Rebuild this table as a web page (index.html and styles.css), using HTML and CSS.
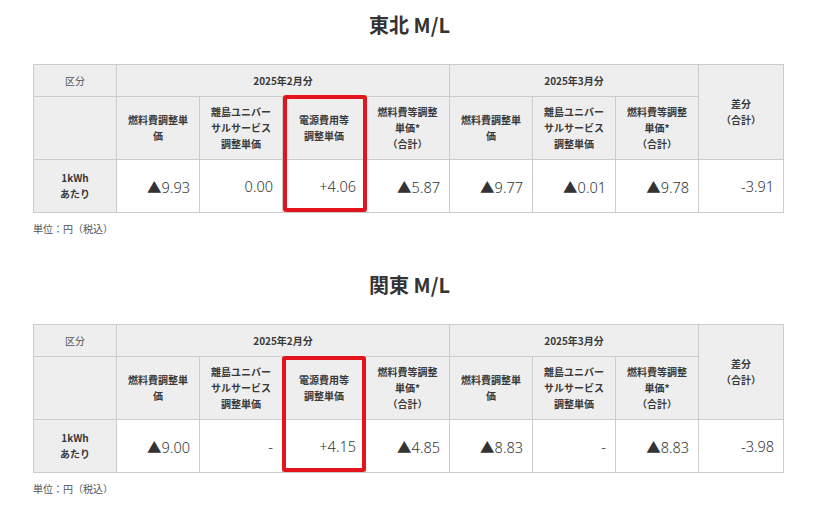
FILE: index.html
```html
<!DOCTYPE html>
<html lang="ja">
<head>
<meta charset="utf-8">
<title>燃料費調整単価</title>
<link rel="stylesheet" href="styles.css">
</head>
<body>
<main class="page">
  <section class="block">
    <h2 class="title">東北 M/L</h2>
    <div class="table-wrap">
      <table class="rate">
        <colgroup>
          <col class="c83"><col class="c83"><col class="c83"><col class="c83"><col class="c84"><col class="c83"><col class="c83"><col class="c83"><col class="c85">
        </colgroup>
        <tr class="r1">
          <th class="label">区分</th>
          <th colspan="4">2025年2月分</th>
          <th colspan="3">2025年3月分</th>
          <th rowspan="2">差分<br>（合計）</th>
        </tr>
        <tr class="r2">
          <th></th>
          <th>燃料費調整単<br>価</th>
          <th>離島ユニバー<br>サルサービス<br>調整単価</th>
          <th>電源費用等<br>調整単価</th>
          <th>燃料費等調整<br>単価*<br>（合計）</th>
          <th>燃料費調整単<br>価</th>
          <th>離島ユニバー<br>サルサービス<br>調整単価</th>
          <th>燃料費等調整<br>単価*<br>（合計）</th>
        </tr>
        <tr class="r3">
          <th>1kWh<br>あたり</th>
          <td>▲9.93</td>
          <td>0.00</td>
          <td>+4.06</td>
          <td>▲5.87</td>
          <td>▲9.77</td>
          <td>▲0.01</td>
          <td>▲9.78</td>
          <td>-3.91</td>
        </tr>
      </table>
      <div class="highlight"></div>
    </div>
    <p class="note">単位：円（税込）</p>
  </section>

  <section class="block">
    <h2 class="title">関東 M/L</h2>
    <div class="table-wrap">
      <table class="rate">
        <colgroup>
          <col class="c83"><col class="c83"><col class="c83"><col class="c83"><col class="c84"><col class="c83"><col class="c83"><col class="c83"><col class="c85">
        </colgroup>
        <tr class="r1">
          <th class="label">区分</th>
          <th colspan="4">2025年2月分</th>
          <th colspan="3">2025年3月分</th>
          <th rowspan="2">差分<br>（合計）</th>
        </tr>
        <tr class="r2">
          <th></th>
          <th>燃料費調整単<br>価</th>
          <th>離島ユニバー<br>サルサービス<br>調整単価</th>
          <th>電源費用等<br>調整単価</th>
          <th>燃料費等調整<br>単価*<br>（合計）</th>
          <th>燃料費調整単<br>価</th>
          <th>離島ユニバー<br>サルサービス<br>調整単価</th>
          <th>燃料費等調整<br>単価*<br>（合計）</th>
        </tr>
        <tr class="r3">
          <th>1kWh<br>あたり</th>
          <td>▲9.00</td>
          <td>-</td>
          <td>+4.15</td>
          <td>▲4.85</td>
          <td>▲8.83</td>
          <td>-</td>
          <td>▲8.83</td>
          <td>-3.98</td>
        </tr>
      </table>
      <div class="highlight highlight-alt"></div>
    </div>
    <p class="note">単位：円（税込）</p>
  </section>
</main>
</body>
</html>
```

FILE: styles.css
```css
html, body {
  margin: 0;
  padding: 0;
  background: #ffffff;
}

body {
  font-family: "Noto Sans", "Noto Sans CJK JP", sans-serif;
  color: #333333;
}

.page {
  padding: 10px 0 0 33px;
  width: 751px;
}

.block {
  margin: 0 0 33px 0;
}

.title {
  margin: 0 0 25px 0;
  font-family: "Noto Sans CJK JP", "Noto Sans", sans-serif;
  font-size: 20px;
  font-weight: 700;
  line-height: 29px;
  text-align: center;
  color: #333333;
  transform: translateX(1px);
}

.table-wrap {
  position: relative;
  width: 751px;
}

.rate {
  width: 751px;
  table-layout: fixed;
  border-collapse: collapse;
}

.rate .c83 {
  width: 83px;
}

.rate .c84 {
  width: 84px;
}

.rate .c85 {
  width: 85px;
}

.rate th,
.rate td {
  border: 1px solid #cccccc;
  padding: 0 6px;
}

.rate th {
  background: #eeeeee;
  font-family: "Noto Sans CJK JP", "Noto Sans", sans-serif;
  font-size: 10px;
  font-weight: 700;
  line-height: 16px;
  color: #3a3a3a;
  text-align: center;
  vertical-align: middle;
}

.rate th.label {
  font-weight: 400;
  color: #555555;
}

.rate td {
  background: #ffffff;
  font-family: "Noto Sans", "Noto Sans CJK JP", sans-serif;
  font-size: 14.5px;
  font-weight: 300;
  color: #333333;
  text-align: right;
  padding-right: 9px;
  vertical-align: middle;
}

.rate .r1 {
  height: 32px;
}

.rate .r2 {
  height: 63px;
}

.rate .r3 {
  height: 53px;
}

.highlight {
  position: absolute;
  left: 250px;
  top: 31px;
  width: 76px;
  height: 109px;
  border: 4px solid #e3141b;
  border-radius: 3px;
}

.highlight-alt {
  left: 249px;
  top: 32px;
  height: 108px;
}

.note {
  margin: 8px 0 0 0;
  font-family: "Noto Sans CJK JP", "Noto Sans", sans-serif;
  font-size: 10px;
  line-height: 16px;
  color: #555555;
}
```
